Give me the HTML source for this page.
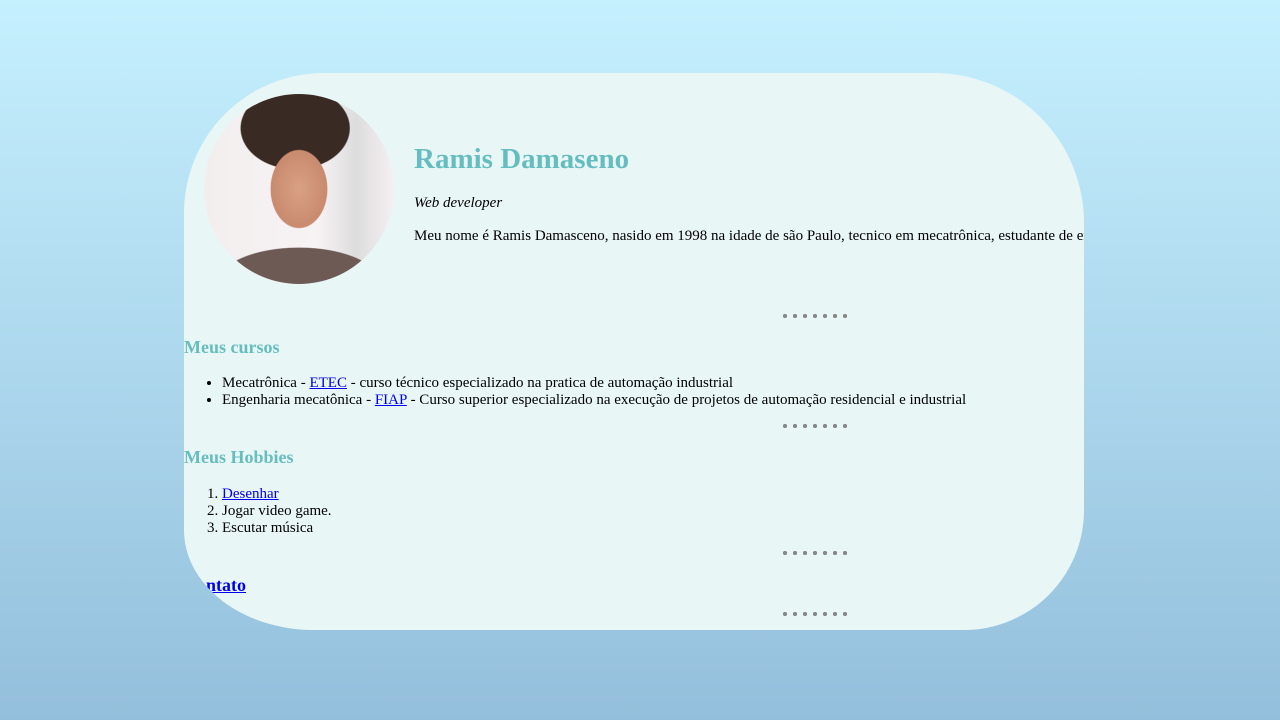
<!DOCTYPE html>
<html><head><meta charset="utf-8"><style>
html,body{margin:0;height:720px;overflow:hidden}
body{background:linear-gradient(#c5f0fe 0%,#94bfdc 100%);font-family:"Liberation Serif",serif;color:#000;font-size:16px}
.card{position:absolute;left:184px;top:73px;width:900px;height:557px;background:#e9f6f6;border-radius:140px 150px 120px 130px/140px 150px 120px 100px;overflow:hidden}
.photo{position:absolute;left:20px;top:21px;width:190px;height:190px;border-radius:50%;overflow:hidden;background:radial-gradient(ellipse 40px 55px at 50% 50%,#d9a184 0%,#c98a6e 70%,transparent 72%),radial-gradient(ellipse 60px 45px at 48% 18%,#3a2a24 0%,#3a2a24 90%,transparent 92%),radial-gradient(ellipse 90px 40px at 50% 100%,#6d5a55 0%,#6d5a55 90%,transparent 92%),linear-gradient(90deg,#f3eeee,#f7f2f4 60%,#ddd 80%,#f5f0f2)}
h1{position:absolute;left:230px;top:70px;margin:0;font-size:29px;color:#66bdbf;font-weight:bold}
.role{position:absolute;left:230px;top:122px;font-style:italic;font-size:15px}
.bio{position:absolute;left:230px;top:155px;white-space:nowrap;font-size:15px}
h3{position:absolute;left:0;margin:0;font-size:18px;color:#66bdbf}
.dots{position:absolute;left:599px;width:66px;height:4px;background:radial-gradient(circle at 2px 2px,#888 2px,transparent 2.3px);background-size:10px 4px}
ul,ol{position:absolute;left:0;margin:0;padding-left:38px;font-size:15px;line-height:17px}
a{color:#0000ee}
</style></head><body>
<div class="card">
<div class="photo"></div>
<h1>Ramis Damaseno</h1>
<div class="role">Web developer</div>
<div class="bio">Meu nome é Ramis Damasceno, nasido em 1998 na idade de são Paulo, tecnico em mecatrônica, estudante de engenharia</div>
<div class="dots" style="top:241px"></div>
<h3 style="top:264px">Meus cursos</h3>
<ul style="top:302px"><li>Mecatrônica - <a href="#">ETEC</a> - curso técnico especializado na pratica de automação industrial</li><li>Engenharia mecatônica - <a href="#">FIAP</a> - Curso superior especializado na execução de projetos de automação residencial e industrial</li></ul>
<div class="dots" style="top:351px"></div>
<h3 style="top:374px">Meus Hobbies</h3>
<ol style="top:413px"><li><a href="#">Desenhar</a></li><li>Jogar video game.</li><li>Escutar música</li></ol>
<div class="dots" style="top:478px"></div>
<h3 style="top:502px"><a href="#" style="color:#0000ee">Contato</a></h3>
<div class="dots" style="top:539px"></div>
</div>
</body></html>
